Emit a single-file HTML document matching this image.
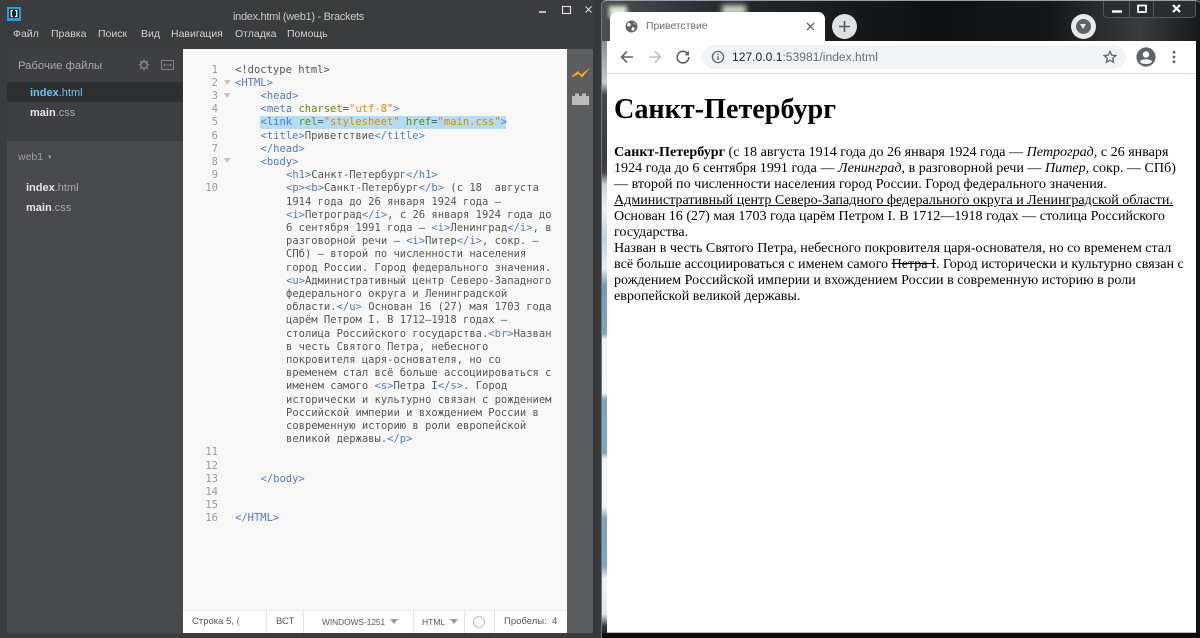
<!DOCTYPE html>
<html><head><meta charset="utf-8">
<style>
html,body{margin:0;padding:0;width:1200px;height:638px;overflow:hidden;background:#3a3c3e}
*{box-sizing:border-box}
.a{position:absolute;white-space:pre}
#code{position:absolute;left:0;top:1px}
#code .l,#code .n{position:absolute;font:10.5px/13px "DejaVu Sans Mono","Liberation Mono",monospace;white-space:pre;color:#555}
#code .n{left:190px;width:28px;text-align:right;color:#9a9a9a}
.t{color:#5577c0}.k{color:#6d8600}.s{color:#e88501}
.m{font:10.5px "Liberation Sans",sans-serif;color:#d0d0d0;top:28px}
.fn{font:bold 11px "Liberation Sans",sans-serif;color:#e6e6e6}
.fn span{font-weight:400;color:#a8a8a8}
#pg div{position:absolute;left:614px;white-space:pre;font:14.08px/16px "Liberation Serif",serif;color:#000}
.sb{position:absolute;top:612px;font:9.5px/20px "Liberation Sans",sans-serif;color:#555;white-space:pre}
.sep{position:absolute;top:611px;height:22px;width:1px;background:#e2e2e2}
</style></head>
<body>
<div style="position:absolute;left:0;top:0;width:601px;height:638px;background:#3a3c3e;overflow:hidden">
<div style="position:absolute;left:7px;top:49px;width:176px;height:92px;background:#3d3f42"></div>
<div style="position:absolute;left:7px;top:141px;width:176px;height:431px;background:#47494c"></div>
<div style="position:absolute;left:7px;top:82px;width:176px;height:20px;background:#2e2f31"></div>
<div style="position:absolute;left:183px;top:49px;width:384px;height:584px;background:#f8f8f8"></div>
<div style="position:absolute;left:183px;top:610px;width:384px;height:23px;background:#fff;border-top:1px solid #e8e8e8"></div>
<div style="position:absolute;left:567px;top:49px;width:26px;height:584px;background:#5c5d5f"></div>
<div style="position:absolute;left:593px;top:0;width:8px;height:638px;background:#36383a"></div>
<div style="position:absolute;left:7px;top:572px;width:176px;height:61px;background:#47494c"></div>
</div>

<svg class="a" style="left:7px;top:7px" width="14" height="14" viewBox="0 0 14 14"><rect width="14" height="14" fill="#2a9bdc"/><rect x="2" y="2" width="10" height="9" fill="#16202a"/><path d="M6 3.5H4.2V9.5H6M8 3.5H9.8V9.5H8" fill="none" stroke="#fff" stroke-width="1.3"/></svg>
<div class="a" style="left:233px;top:11px;font:11px 'Liberation Sans',sans-serif;color:#c8c8c8;letter-spacing:-.3px">index.html (web1) - Brackets</div>
<div class="a m" style="left:13px">Файл</div>
<div class="a m" style="left:51px">Правка</div>
<div class="a m" style="left:98px">Поиск</div>
<div class="a m" style="left:141px">Вид</div>
<div class="a m" style="left:171px">Навигация</div>
<div class="a m" style="left:235px">Отладка</div>
<div class="a m" style="left:287px">Помощь</div>
<svg class="a" style="left:535px;top:3px" width="60" height="12" viewBox="0 0 60 12"><path d="M4 9H11" stroke="#ddd" stroke-width="1.6"/><rect x="27.5" y="3.5" width="8" height="7" fill="none" stroke="#ddd" stroke-width="1.2"/><path d="M50.5 3.5L56.5 9.5M56.5 3.5L50.5 9.5" stroke="#ddd" stroke-width="1.1"/></svg>

<div class="a" style="left:18px;top:60px;font:11.3px 'Liberation Sans',sans-serif;color:#a8a8a8">Рабочие файлы</div>
<svg class="a" style="left:138px;top:59px" width="12" height="12" viewBox="0 0 12 12"><circle cx="6" cy="6" r="3.2" fill="none" stroke="#777" stroke-width="2"/><path d="M6 0.5V2.5M6 9.5V11.5M.5 6H2.5M9.5 6H11.5M2 2L3.5 3.5M8.5 8.5L10 10M2 10L3.5 8.5M8.5 3.5L10 2" stroke="#777" stroke-width="1.6"/></svg>
<svg class="a" style="left:161px;top:59px" width="13" height="12" viewBox="0 0 13 12"><rect x=".5" y="1.5" width="12" height="9" fill="none" stroke="#808080"/><path d="M2.5 6H10.5M2.5 6L4 4.7M2.5 6L4 7.3M10.5 6L9 4.7M10.5 6L9 7.3" stroke="#808080" stroke-width=".8" fill="none"/></svg>
<div class="a fn" style="left:30px;top:87px;color:#6bc4f0">index<span style="color:#6bc4f0">.html</span></div>
<div class="a fn" style="left:30px;top:107px">main<span>.css</span></div>
<div class="a" style="left:18px;top:151px;font:10.5px 'Liberation Sans',sans-serif;color:#a0a0a0">web1</div>
<div class="a" style="left:48px;top:153px;font:7px 'DejaVu Sans',sans-serif;color:#999">▾</div>
<div class="a fn" style="left:26px;top:182px">index<span>.html</span></div>
<div class="a fn" style="left:26px;top:202px">main<span>.css</span></div>

<div class="a" style="left:260px;top:116px;width:246px;height:13px;background:#b3dcf7"></div>

<div id="code">
<div class="n" style="top:63px">1</div><div class="l" style="left:235px;top:63px">&lt;!doctype html&gt;</div>
<div class="n" style="top:76px">2</div><div class="l" style="left:235px;top:76px;color:#5577c0">&lt;HTML&gt;</div>
<div class="n" style="top:89px">3</div><div class="l" style="left:260.5px;top:89px;color:#5577c0">&lt;head&gt;</div>
<div class="n" style="top:102px">4</div><div class="l" style="left:260.5px;top:102px"><span class="t">&lt;meta</span> <span class="k">charset</span>=<span class="s">"utf-8"</span><span class="t">&gt;</span></div>
<div class="n" style="top:115px">5</div><div class="l" style="left:260.5px;top:115px"><span class="t">&lt;link</span> <span class="k">rel</span>=<span class="s">"stylesheet"</span> <span class="k">href</span>=<span class="s">"main.css"</span><span class="t">&gt;</span></div>
<div class="n" style="top:129px">6</div><div class="l" style="left:260.5px;top:129px"><span class="t">&lt;title&gt;</span>Приветствие<span class="t">&lt;/title&gt;</span></div>
<div class="n" style="top:142px">7</div><div class="l" style="left:260.5px;top:142px;color:#5577c0">&lt;/head&gt;</div>
<div class="n" style="top:155px">8</div><div class="l" style="left:260.5px;top:155px;color:#5577c0">&lt;body&gt;</div>
<div class="n" style="top:168px">9</div><div class="l" style="left:286px;top:168px"><span class="t">&lt;h1&gt;</span>Санкт-Петербург<span class="t">&lt;/h1&gt;</span></div>
<div class="n" style="top:181px">10</div><div class="l" style="left:286px;top:181px"><span class="t">&lt;p&gt;&lt;b&gt;</span>Санкт-Петербург<span class="t">&lt;/b&gt;</span> (с 18  августа</div>
<div class="l" style="left:286px;top:195px">1914 года до 26 января 1924 года —</div>
<div class="l" style="left:286px;top:208px"><span class="t">&lt;i&gt;</span>Петроград<span class="t">&lt;/i&gt;</span>, с 26 января 1924 года до</div>
<div class="l" style="left:286px;top:221px">6 сентября 1991 года — <span class="t">&lt;i&gt;</span>Ленинград<span class="t">&lt;/i&gt;</span>, в</div>
<div class="l" style="left:286px;top:234px">разговорной речи — <span class="t">&lt;i&gt;</span>Питер<span class="t">&lt;/i&gt;</span>, сокр. —</div>
<div class="l" style="left:286px;top:247px">СПб) — второй по численности населения</div>
<div class="l" style="left:286px;top:261px">город России. Город федерального значения.</div>
<div class="l" style="left:286px;top:274px"><span class="t">&lt;u&gt;</span>Административный центр Северо-Западного</div>
<div class="l" style="left:286px;top:287px">федерального округа и Ленинградской</div>
<div class="l" style="left:286px;top:300px">области.<span class="t">&lt;/u&gt;</span> Основан 16 (27) мая 1703 года</div>
<div class="l" style="left:286px;top:313px">царём Петром I. В 1712—1918 годах —</div>
<div class="l" style="left:286px;top:327px">столица Российского государства.<span class="t">&lt;br&gt;</span>Назван</div>
<div class="l" style="left:286px;top:340px">в честь Святого Петра, небесного</div>
<div class="l" style="left:286px;top:353px">покровителя царя-основателя, но со</div>
<div class="l" style="left:286px;top:366px">временем стал всё больше ассоциироваться с</div>
<div class="l" style="left:286px;top:379px">именем самого <span class="t">&lt;s&gt;</span>Петра I<span class="t">&lt;/s&gt;</span>. Город</div>
<div class="l" style="left:286px;top:393px">исторически и культурно связан с рождением</div>
<div class="l" style="left:286px;top:406px">Российской империи и вхождением России в</div>
<div class="l" style="left:286px;top:419px">современную историю в роли европейской</div>
<div class="l" style="left:286px;top:432px">великой державы.<span class="t">&lt;/p&gt;</span></div>
<div class="n" style="top:445px">11</div>
<div class="n" style="top:459px">12</div>
<div class="n" style="top:472px">13</div><div class="l" style="left:260.5px;top:472px;color:#5577c0">&lt;/body&gt;</div>
<div class="n" style="top:485px">14</div>
<div class="n" style="top:498px">15</div>
<div class="n" style="top:511px">16</div><div class="l" style="left:235px;top:511px;color:#5577c0">&lt;/HTML&gt;</div>
</div>
<svg class="a" style="left:224px;top:78px" width="7" height="90" viewBox="0 0 7 90"><path d="M0 2H6.5L3.2 7ZM0 15H6.5L3.2 20ZM0 80H6.5L3.2 85Z" fill="#c4c4c4"/></svg>

<svg class="a" style="left:570px;top:65px" width="21" height="15" viewBox="0 0 21 15"><path d="M1 12L8 6L11 9.5L20 3L12 12.5L8.5 9L3 12Z" fill="#f5a623"/></svg>
<svg class="a" style="left:572px;top:92px" width="17" height="14" viewBox="0 0 17 14"><path d="M0 13V4H3V1.5H7V4H10V1.5H14V4H17V13Z" fill="#bcbcbc"/></svg>

<div class="sb" style="left:192px">Строка 5, <span style="color:#888">(</span></div>
<div class="sep" style="left:266px"></div>
<div class="sb" style="left:276px">ВСТ</div>
<div class="sep" style="left:303px"></div>
<div class="sb" style="left:322px;font-size:8.3px">WINDOWS-1251</div>
<div class="a" style="left:390px;top:619px;width:0;height:0;border:4px solid transparent;border-top:5px solid #999;border-bottom:0"></div>
<div class="sep" style="left:413px"></div>
<div class="sb" style="left:422px;font-size:8.5px">HTML</div>
<div class="a" style="left:450px;top:619px;width:0;height:0;border:4px solid transparent;border-top:5px solid #999;border-bottom:0"></div>
<div class="sep" style="left:464px"></div>
<div class="a" style="left:473px;top:616px;width:12px;height:12px;border:1px solid #bbb;border-radius:50%"></div>
<div class="sep" style="left:494px"></div>
<div class="sb" style="left:504px">Пробелы:&nbsp; 4</div>

<!-- browser -->
<div style="position:absolute;left:601px;top:0;width:599px;height:638px;background:linear-gradient(90deg,#4a5054 0,#262a2e 20%,#0e1012 55%,#15181b 75%,#3a3d40 90%,#16181b 100%);border-top:1px solid #9a9d9f;border-left:1px solid #777;border-radius:5px 5px 0 0"></div>
<div style="position:absolute;left:602px;top:41px;width:5px;height:597px;background:linear-gradient(180deg,#8a8f92 0,#c8cbcd 7%,#44484c 9%,#3a3e42 20%,#444 22%,#c8d4de 24%,#eef2f6 28%,#bcd0e2 33%,#e8eff5 38%,#6f9abb 41%,#7fa5c3 49%,#eef3f7 50%,#f2f5f8 59%,#7da4c2 60%,#80a6c4 69%,#f2f5f8 70%,#f2f5f8 78%,#7da4c2 80%,#7fa5c3 88%,#eef3f7 90%,#dfe6ec 96%,#2b4050 98%,#111 100%)"></div>
<div style="position:absolute;left:1196px;top:41px;width:4px;height:597px;background:#0d1216"></div>
<div style="position:absolute;left:602px;top:633px;width:598px;height:5px;background:#0c0e10"></div>
<div style="position:absolute;left:607px;top:41px;width:589px;height:592px;background:#fff"></div>
<div style="position:absolute;left:607px;top:632px;width:589px;height:1px;background:#bbb"></div>
<div style="position:absolute;left:609px;top:6px;width:18px;height:12px;background:#dfe8d8;filter:blur(2px)"></div>
<div style="position:absolute;left:722px;top:5px;width:24px;height:10px;background:#cfd8c8;filter:blur(3px)"></div>
<div style="position:absolute;left:610px;top:12px;width:215px;height:30px;background:#fff;border-radius:7px 7px 0 0"></div>
<div style="position:absolute;left:607px;top:73px;width:589px;height:1px;background:#dcdde0"></div>
<div style="position:absolute;left:702px;top:45px;width:424px;height:24px;background:#f1f3f4;border-radius:12px"></div>

<svg class="a" style="left:625px;top:20px" width="13" height="13" viewBox="0 0 13 13"><circle cx="6.5" cy="6.5" r="6" fill="#5f6368"/><path d="M3 2.5L6 4L5 6.5L2 6ZM7 7L10 8L8.5 11L6.5 10ZM8 1.5L9.5 4L11.5 5" fill="#fff"/></svg>
<div class="a" style="left:646px;top:21px;font:10.4px 'Liberation Sans',sans-serif;color:#6a6d70">Приветствие</div>
<svg class="a" style="left:806px;top:22px" width="9" height="9" viewBox="0 0 9 9"><path d="M1 1L8 8M8 1L1 8" stroke="#5f6368" stroke-width="1.3"/></svg>
<div class="a" style="left:832px;top:14px;width:25px;height:25px;border-radius:50%;background:#dee1e6"></div>
<svg class="a" style="left:838px;top:20px" width="13" height="13" viewBox="0 0 13 13"><path d="M6.5 1V12M1 6.5H12" stroke="#55585c" stroke-width="1.6"/></svg>
<div class="a" style="left:1071px;top:14px;width:25px;height:25px;border-radius:50%;background:#e8eaed"></div>
<div class="a" style="left:1076px;top:19px;width:15px;height:15px;border-radius:50%;background:#5f6368"></div>
<div class="a" style="left:1080px;top:24px;width:0;height:0;border:3.5px solid transparent;border-top:5px solid #e8eaed;border-bottom:0"></div>
<div class="a" style="left:1103px;top:1px;width:93px;height:17px;background:#2a2d30;border:1px solid #55585b;border-top:0;border-radius:0 0 4px 4px"></div>
<div class="a" style="left:1129px;top:1px;width:1px;height:16px;background:#55585b"></div>
<div class="a" style="left:1153px;top:1px;width:1px;height:16px;background:#55585b"></div>
<svg class="a" style="left:1103px;top:0" width="93" height="18" viewBox="0 0 93 18"><path d="M9 11.5H19" stroke="#fff" stroke-width="2.4"/><rect x="35" y="5.5" width="8" height="6.5" fill="none" stroke="#fff" stroke-width="1.8"/><path d="M70 5L77 12M77 5L70 12" stroke="#fff" stroke-width="2.2"/></svg>

<svg class="a" style="left:619px;top:49px" width="16" height="16" viewBox="0 0 16 16"><path d="M14 8H2.5M8 2.5L2.5 8L8 13.5" fill="none" stroke="#5f6368" stroke-width="1.6"/></svg>
<svg class="a" style="left:647px;top:49px" width="16" height="16" viewBox="0 0 16 16"><path d="M2 8H13.5M8 2.5L13.5 8L8 13.5" fill="none" stroke="#bdc1c6" stroke-width="1.6"/></svg>
<svg class="a" style="left:675px;top:49px" width="16" height="16" viewBox="0 0 16 16"><path d="M13 5.2A5.8 5.8 0 1 0 13.8 8" fill="none" stroke="#5f6368" stroke-width="1.6"/><path d="M14 1.8V6.4H9.4Z" fill="#5f6368"/></svg>
<svg class="a" style="left:711px;top:50px" width="14" height="14" viewBox="0 0 14 14"><circle cx="7" cy="7" r="5.6" fill="none" stroke="#5f6368" stroke-width="1.3"/><path d="M7 6.2V10M7 3.8V5.2" stroke="#5f6368" stroke-width="1.4"/></svg>
<div class="a" style="left:732px;top:50px;font:12.1px 'Liberation Sans',sans-serif;color:#202124">127.0.0.1<span style="color:#6a6d70">:53981/index.html</span></div>
<svg class="a" style="left:1103px;top:50px" width="14" height="14" viewBox="0 0 14 14"><path d="M7 1.3L8.7 5.1L12.8 5.5L9.7 8.2L10.6 12.3L7 10.2L3.4 12.3L4.3 8.2L1.2 5.5L5.3 5.1Z" fill="none" stroke="#5f6368" stroke-width="1.3"/></svg>
<svg class="a" style="left:1136px;top:47px" width="20" height="20" viewBox="0 0 20 20"><circle cx="10" cy="10" r="9.6" fill="#5f6368"/><circle cx="10" cy="7.5" r="3.2" fill="#fff"/><path d="M3.8 14.5C6 11.5 14 11.5 16.2 14.5C14.5 16.5 12.5 17 10 17C7.5 17 5.5 16.5 3.8 14.5Z" fill="#fff"/></svg>
<svg class="a" style="left:1172px;top:50px" width="4" height="14" viewBox="0 0 4 14"><circle cx="2" cy="2.2" r="1.4" fill="#5f6368"/><circle cx="2" cy="7" r="1.4" fill="#5f6368"/><circle cx="2" cy="11.8" r="1.4" fill="#5f6368"/></svg>

<div id="pg">
<div style="top:91px;font:bold 28.16px/37px 'Liberation Serif',serif">Санкт-Петербург</div>
<div style="top:144px"><b>Санкт-Петербург</b> (с 18 августа 1914 года до 26 января 1924 года — <i>Петроград</i>, с 26 января</div>
<div style="top:160px">1924 года до 6 сентября 1991 года — <i>Ленинград</i>, в разговорной речи — <i>Питер</i>, сокр. — СПб)</div>
<div style="top:176px">— второй по численности населения город России. Город федерального значения.</div>
<div style="top:192px"><u>Административный центр Северо-Западного федерального округа и Ленинградской области.</u></div>
<div style="top:208px">Основан 16 (27) мая 1703 года царём Петром I. В 1712—1918 годах — столица Российского</div>
<div style="top:224px">государства.</div>
<div style="top:240px">Назван в честь Святого Петра, небесного покровителя царя-основателя, но со временем стал</div>
<div style="top:256px">всё больше ассоциироваться с именем самого <s>Петра I</s>. Город исторически и культурно связан с</div>
<div style="top:272px">рождением Российской империи и вхождением России в современную историю в роли</div>
<div style="top:288px">европейской великой державы.</div>
</div>
</body></html>
